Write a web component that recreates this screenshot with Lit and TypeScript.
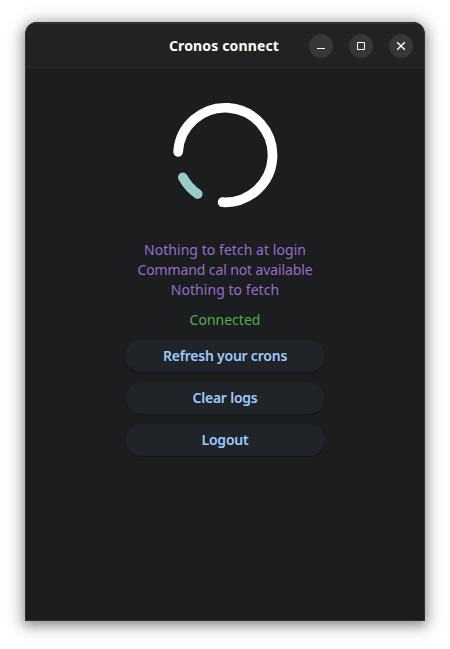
import { LitElement, html, css } from "lit";
import { customElement, state } from "lit/decorators.js";

@customElement("title-bar")
class TitleBar extends LitElement {
  static styles = css`
    :host {
      display: grid;
      grid-template-columns: 1fr auto 1fr;
      align-items: center;
      box-sizing: border-box;
      height: 48px;
      flex: none;
      padding: 0 11px 1px 9px;
      background: #222222;
      border-top: 2px solid #303030;
      border-bottom: 1px solid #191a1b;
    }
    .title {
      grid-column: 2;
      color: #fff;
      font-size: 14px;
      font-weight: 700;
      line-height: 20px;
      letter-spacing: 0.15px;
      white-space: nowrap;
    }
    .controls {
      display: flex;
      justify-content: flex-end;
      gap: 16px;
    }
    .control {
      width: 24px;
      height: 24px;
      padding: 0;
      border: 0;
      border-radius: 50%;
      background: #373737;
    }
    svg {
      display: block;
      fill: none;
      stroke: #fff;
    }
  `;

  render() {
    return html`
      <span class="title">Cronos connect</span>
      <div class="controls">
        <button class="control" aria-label="Minimize">
          <svg width="24" height="24"><path d="M8 14.5h8" /></svg>
        </button>
        <button class="control" aria-label="Maximize">
          <svg width="24" height="24"><path d="M8.5 8.5h7v7h-7z" /></svg>
        </button>
        <button class="control" aria-label="Close">
          <svg width="24" height="24"><path stroke-width="1.4" d="M8.2 8.2l7.6 7.6M15.8 8.2l-7.6 7.6" /></svg>
        </button>
      </div>
    `;
  }
}

@customElement("app-root")
class AppRoot extends LitElement {
  static styles = css`
    :host {
      display: block;
      box-sizing: border-box;
      height: 649px;
      padding: 22px 25px 28px;
      overflow: hidden;
      background: #fff;
      font-family: "Noto Sans", "Open Sans", sans-serif;
    }
    .window {
      display: flex;
      flex-direction: column;
      box-sizing: border-box;
      height: 599px;
      overflow: hidden;
      border: 1px solid #303132;
      border-top: 0;
      border-radius: 12px 12px 0 0;
      background: #1c1d1e;
      box-shadow: 0 3px 12px 1px rgba(0, 0, 0, 0.38), 0 2px 18px 5px rgba(0, 0, 0, 0.14);
    }
    .content {
      display: flex;
      flex-direction: column;
      align-items: center;
      padding-top: 30px;
      font-size: 14px;
      line-height: 20px;
    }
    .ring {
      display: block;
      fill: none;
      stroke-width: 9.7;
      stroke-linecap: round;
    }
    .logs {
      display: flex;
      flex-direction: column;
      align-items: center;
      margin-top: 30px;
      color: #9370cb;
    }
    .wide {
      letter-spacing: 0.05px;
    }
    .narrow {
      letter-spacing: -0.12px;
    }
    .status {
      margin: 10px 0;
      color: #4caf50;
    }
    .actions {
      display: flex;
      flex-direction: column;
      gap: 10px;
    }
    .action {
      width: 200px;
      height: 32px;
      padding: 0;
      border: 0;
      border-radius: 16px;
      background: #202327;
      box-shadow: 0 1px 1px rgba(0, 0, 0, 0.3);
      color: #9ecaff;
      font: 600 14px/32px "Noto Sans", "Open Sans", sans-serif;
      letter-spacing: -0.22px;
    }
  `;

  @state() logs = [
    { text: "Nothing to fetch at login", fit: "wide" },
    { text: "Command cal not available", fit: "narrow" },
    { text: "Nothing to fetch", fit: "wide" },
  ];
  @state() actions = ["Refresh your crons", "Clear logs", "Logout"];

  render() {
    return html`
      <div class="window">
        <title-bar></title-bar>
        <div class="content">
          <svg class="ring" width="110" height="110" viewBox="-55 -55 110 110">
            <path stroke="#fff" d="M-46.9-3.2A47.25 47.25 0 1 1-2.4 47.2" />
            <path stroke="#99cccc" d="M-42.2 22.3A47.5 47.5 0 0 0-27.3 39" />
          </svg>
          <div class="logs">${this.logs.map((l) => html`<span class=${l.fit}>${l.text}</span>`)}</div>
          <div class="status">Connected</div>
          <div class="actions">
            ${this.actions.map((a) => html`<button class="action">${a}</button>`)}
          </div>
        </div>
      </div>
    `;
  }
}
